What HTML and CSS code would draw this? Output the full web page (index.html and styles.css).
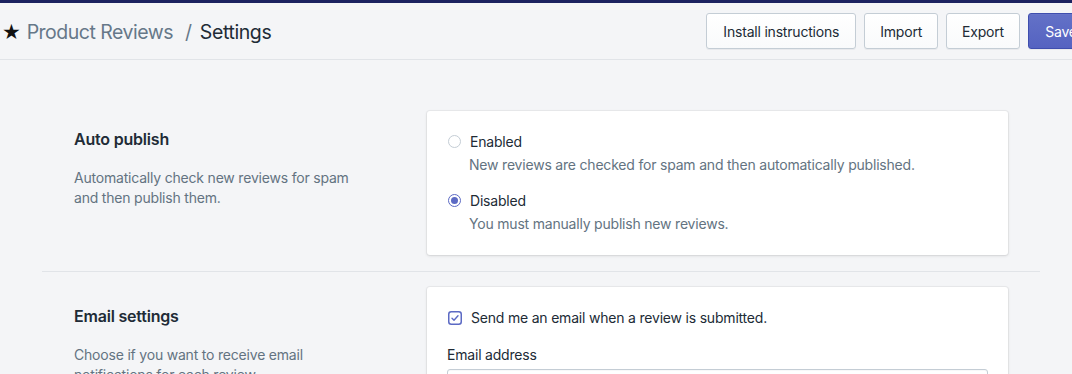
FILE: index.html
```html
<!DOCTYPE html>
<html lang="en">
<head>
  <meta charset="UTF-8">
  <title>Settings - Product Reviews</title>
  <link rel="stylesheet" href="styles.css">
</head>
<body>
  <div class="app-bar"></div>

  <header class="topbar">
    <div class="breadcrumbs">
      <span class="star">★</span>
      <span class="crumb">Product Reviews</span>
      <span class="sep">/</span>
      <span class="current">Settings</span>
    </div>
    <div class="actions">
      <button class="btn">Install instructions</button>
      <button class="btn">Import</button>
      <button class="btn">Export</button>
      <button class="btn btn-primary">Save</button>
    </div>
  </header>

  <main class="settings">
    <section class="setting">
      <div class="annotation">
        <h2>Auto publish</h2>
        <p>Automatically check new reviews for spam and then publish them.</p>
      </div>
      <div class="card">
        <label class="choice">
          <span class="radio"></span>
          <span>Enabled</span>
        </label>
        <p class="help">New reviews are checked for spam and then automatically published.</p>
        <label class="choice choice-next">
          <span class="radio checked"></span>
          <span>Disabled</span>
        </label>
        <p class="help">You must manually publish new reviews.</p>
      </div>
    </section>

    <section class="setting">
      <div class="annotation">
        <h2>Email settings</h2>
        <p>Choose if you want to receive email notifications for each review.</p>
      </div>
      <div class="card">
        <label class="choice">
          <svg class="checkbox" width="14" height="14" viewBox="0 0 14 14">
            <rect x="0.75" y="0.75" width="12.5" height="12.5" rx="2.5" fill="#fff" stroke="#5c6ac4" stroke-width="1.5"/>
            <path d="M4 7.2 L6 9.2 L10 4.8" fill="none" stroke="#5c6ac4" stroke-width="1.4" stroke-linecap="round" stroke-linejoin="round"/>
          </svg>
          <span>Send me an email when a review is submitted.</span>
        </label>
        <div class="field">
          <label for="email">Email address</label>
          <input id="email" type="email">
        </div>
      </div>
    </section>
  </main>
</body>
</html>
```

FILE: styles.css
```css
html, body {
  overflow: hidden;
}

body {
  margin: 0;
  background: #f4f5f7;
  color: #212b36;
  font-family: Inter, "Liberation Sans", sans-serif;
  font-size: 14px;
  line-height: 20px;
  letter-spacing: -0.2px;
}

.app-bar {
  height: 3px;
  background: #1c2260;
}

.topbar {
  box-sizing: border-box;
  width: 1110px;
  height: 57px;
  padding: 0 16px 0 2px;
  display: flex;
  align-items: center;
  justify-content: space-between;
  border-bottom: 1px solid #e1e4e8;
}

.breadcrumbs {
  display: flex;
  align-items: center;
  font-size: 19.5px;
  line-height: 24px;
  margin-top: 1px;
}

.star {
  font-size: 21px;
  color: #111;
  margin-right: 6px;
  font-family: "DejaVu Sans", sans-serif;
}

.crumb {
  color: #667889;
  letter-spacing: -0.5px;
}

.sep {
  color: #667889;
  margin: 0 8px 0 12px;
}

.current {
  color: #212b36;
  letter-spacing: -0.4px;
}

.actions {
  display: flex;
  gap: 8px;
}

.btn {
  height: 36px;
  padding: 0 15px;
  font-family: inherit;
  font-size: 14px;
  letter-spacing: -0.2px;
  color: #212b36;
  background: linear-gradient(to bottom, #fff, #f9fafb);
  border: 1px solid #c4cdd5;
  border-radius: 3px;
  box-shadow: 0 1px 0 rgba(22, 29, 37, 0.05);
  cursor: pointer;
}

.btn:first-child {
  padding: 0 16px;
}

.btn-primary {
  width: 66px;
  color: #fff;
  background: linear-gradient(to bottom, #6371c7, #5563c1);
  border-color: #3f4eae;
  box-shadow: inset 0 1px 0 0 #6774c8, 0 1px 0 0 rgba(22, 29, 37, 0.05);
}

.settings {
  width: 998px;
  margin-left: 42px;
  padding-top: 35px;
}

.setting {
  display: grid;
  grid-template-columns: 353px 581px;
  padding: 16px 0 16px 32px;
  border-bottom: 1px solid #e1e4e8;
}

.setting + .setting {
  padding-top: 15px;
}

.annotation {
  padding-top: 16px;
}

.setting + .setting .annotation {
  padding-top: 17px;
}

.annotation h2 {
  margin: 0;
  font-size: 16px;
  line-height: 24px;
  font-weight: 600;
}

.annotation p {
  margin: 17px 0 0;
  width: 285px;
  color: #637381;
}

.card {
  background: #fff;
  border-radius: 3px;
  box-shadow: 0 0 0 1px rgba(63, 63, 68, 0.05), 0 1px 3px 0 rgba(63, 63, 68, 0.15);
  padding: 21px 20px 21px;
}

.choice {
  display: flex;
  align-items: center;
  gap: 9px;
  padding-left: 1px;
}

.choice-next {
  margin-top: 16px;
}

.radio {
  box-sizing: border-box;
  width: 13px;
  height: 13px;
  border-radius: 50%;
  border: 1px solid #c4cdd5;
  background: #fff;
  position: relative;
  margin-top: -1px;
}

.radio.checked {
  border: 1.5px solid #5c6ac4;
}

.radio.checked::after {
  content: "";
  position: absolute;
  inset: 2px;
  border-radius: 50%;
  background: #5c6ac4;
}

.checkbox {
  flex: none;
  margin-top: -1px;
}

.help {
  margin: 3px 0 0 22px;
  color: #637381;
}

.field {
  margin-top: 17px;
}

.field label {
  display: block;
  margin-bottom: 4px;
}

.field input {
  box-sizing: border-box;
  width: 100%;
  height: 36px;
  border: 1px solid #c4cdd5;
  border-radius: 3px;
  box-shadow: inset 0 1px 0 0 rgba(99, 115, 129, 0.05);
}
```
